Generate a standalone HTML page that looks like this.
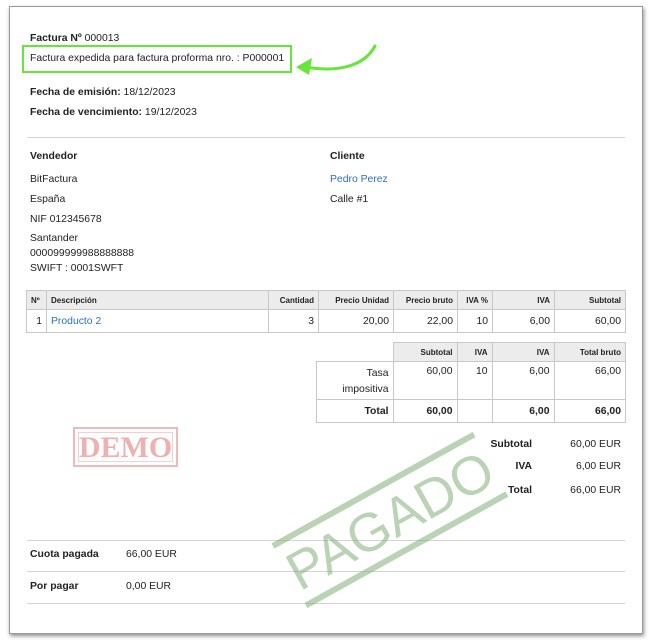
<!DOCTYPE html>
<html><head><meta charset="utf-8"><style>
body{margin:0;width:649px;height:643px;background:#fff;position:relative;overflow:hidden;font-family:"Liberation Sans",Arial,sans-serif;font-size:10.4px;color:#222}
.card{position:absolute;left:9px;top:6px;width:632px;height:626px;border:1px solid #9a9a9a;box-shadow:1px 2px 4px rgba(0,0,0,.45);background:#fff}
.a{position:absolute;white-space:nowrap}
b{font-weight:bold}
.hr{position:absolute;left:27px;width:598px;height:1px;background:#d4d4d4}
table{position:absolute;border-collapse:collapse;font-size:10.4px}
td{border:1px solid #c8c8c8;padding:0 4px;text-align:right;vertical-align:middle}
tr.h td{background:#ececec;font-weight:bold;font-size:8px;height:18px}
.blue{color:#2f6fbf}
</style></head><body>
<div class="card"></div>
<div class="a" style="left:30px;top:33px"><b>Factura Nº</b> 000013</div>
<div class="a" style="left:22px;top:45px;width:266px;height:24px;border:2px solid #66e63a"></div>
<div class="a" style="left:30px;top:53px">Factura expedida para factura proforma nro. : P000001</div>
<svg class="a" style="left:290px;top:40px" width="95" height="40"><path d="M85 6 C75 25 50 33 16 27" fill="none" stroke="#66e63a" stroke-width="3" stroke-linecap="round"/><path d="M6 27 L22 18 L19 35 Z" fill="#66e63a"/></svg>
<div class="a" style="left:30px;top:87px"><b>Fecha de emisión:</b> 18/12/2023</div>
<div class="a" style="left:30px;top:107px"><b>Fecha de vencimiento:</b> 19/12/2023</div>
<div class="hr" style="top:137px"></div>
<div class="a" style="left:30px;top:151px"><b>Vendedor</b></div>
<div class="a" style="left:330px;top:151px"><b>Cliente</b></div>
<div class="a" style="left:30px;top:174px">BitFactura</div>
<div class="a" style="left:330px;top:174px" ><span class="blue">Pedro Perez</span></div>
<div class="a" style="left:30px;top:194px">España</div>
<div class="a" style="left:330px;top:194px">Calle #1</div>
<div class="a" style="left:30px;top:214px">NIF 012345678</div>
<div class="a" style="left:30px;top:233px">Santander</div>
<div class="a" style="left:30px;top:248px">000099999988888888</div>
<div class="a" style="left:30px;top:263px">SWIFT : 0001SWFT</div>
<table style="left:26px;top:290px;width:600px">
<tr class="h"><td style="width:11px;text-align:left">Nº</td><td style="text-align:left;width:213px">Descripción</td><td style="width:41px">Cantidad</td><td style="width:66px">Precio Unidad</td><td style="width:55px">Precio bruto</td><td style="width:26px">IVA %</td><td style="width:53px">IVA</td><td>Subtotal</td></tr>
<tr style="height:23px"><td>1</td><td style="text-align:left" class="blue">Producto 2</td><td>3</td><td>20,00</td><td>22,00</td><td>10</td><td>6,00</td><td>60,00</td></tr>
</table>
<table style="left:316px;top:342px;width:310px">
<tr class="h"><td style="border:none;border-bottom:1px solid #c8c8c8;background:#fff;width:68px"></td><td style="width:55px">Subtotal</td><td style="width:26px">IVA</td><td style="width:53px">IVA</td><td>Total bruto</td></tr>
<tr style="height:38px"><td style="vertical-align:top;padding-top:4px;line-height:16px">Tasa<br>impositiva</td><td style="vertical-align:top;padding-top:4px">60,00</td><td style="vertical-align:top;padding-top:4px">10</td><td style="vertical-align:top;padding-top:4px">6,00</td><td style="vertical-align:top;padding-top:4px">66,00</td></tr>
<tr style="height:23px;font-weight:bold"><td>Total</td><td>60,00</td><td></td><td>6,00</td><td>66,00</td></tr>
</table>
<div class="a" style="left:73px;top:427px;width:101px;height:36px;border:2px solid #f0b8b8;outline:1px solid #f6d0d0;outline-offset:-6px;color:#eeb0b0;font:bold 30px 'Liberation Serif',serif;text-align:center;line-height:37px;letter-spacing:0px">DEMO</div>
<div class="a" style="left:440px;top:439px;width:92px;text-align:right"><b>Subtotal</b></div>
<div class="a" style="left:540px;top:439px;width:81px;text-align:right">60,00 EUR</div>
<div class="a" style="left:440px;top:461px;width:92px;text-align:right"><b>IVA</b></div>
<div class="a" style="left:540px;top:461px;width:81px;text-align:right">6,00 EUR</div>
<div class="a" style="left:440px;top:485px;width:92px;text-align:right"><b>Total</b></div>
<div class="a" style="left:540px;top:485px;width:81px;text-align:right">66,00 EUR</div>
<div class="hr" style="top:540px"></div>
<div class="hr" style="top:571px"></div>
<div class="hr" style="top:603px"></div>
<div class="a" style="left:30px;top:549px"><b>Cuota pagada</b></div>
<div class="a" style="left:126px;top:549px">66,00 EUR</div>
<div class="a" style="left:30px;top:581px"><b>Por pagar</b></div>
<div class="a" style="left:126px;top:581px">0,00 EUR</div>
<div class="a" style="left:275px;top:483px;width:230px;height:62px;border-top:6px solid rgba(130,175,120,.55);border-bottom:6px solid rgba(130,175,120,.55);transform:rotate(-29deg);color:rgba(130,175,120,.55);font:54px 'Liberation Sans',sans-serif;text-align:center;line-height:64px">PAGADO</div>
</body></html>
